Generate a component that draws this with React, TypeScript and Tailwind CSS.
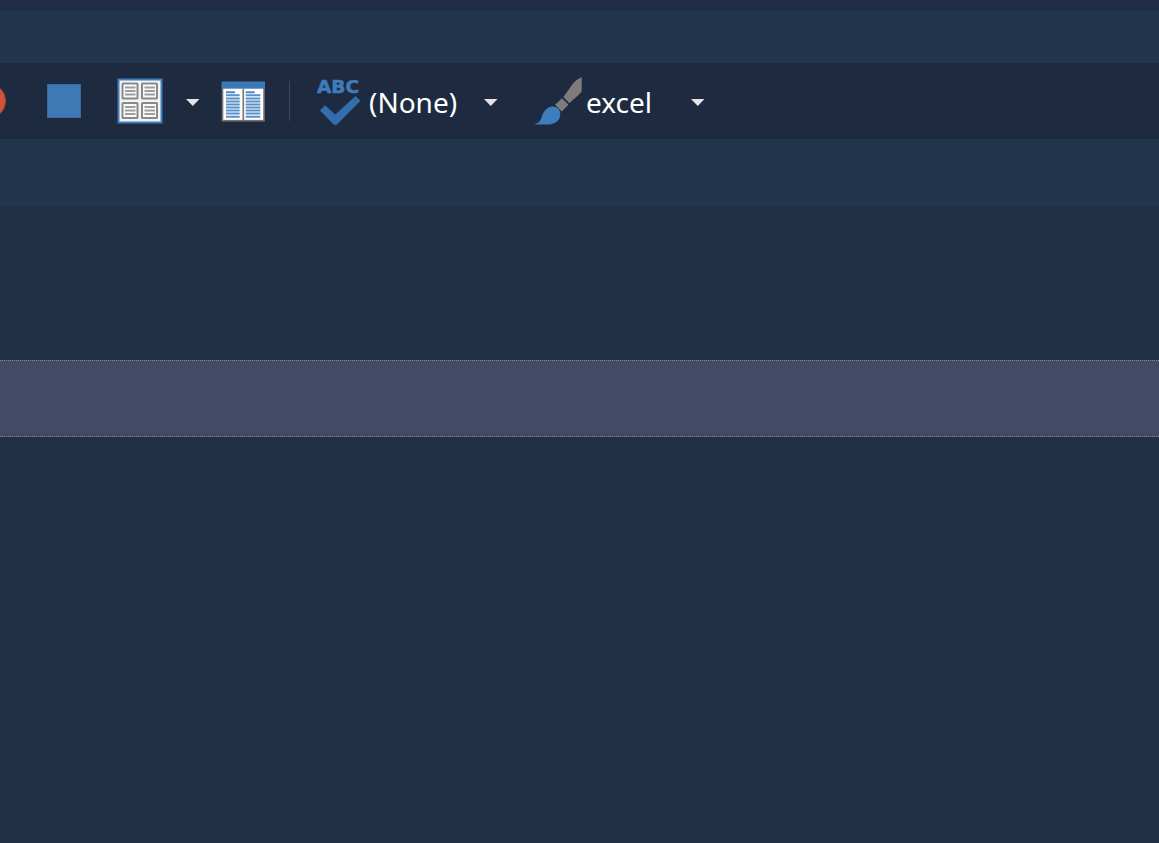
import React from "react";

type ToolSelectProps = {
  label: string;
  options: string[];
  className: string;
};

const Caret: React.FC = () => (
  <svg width="14" height="7" viewBox="0 0 14 7" aria-hidden="true">
    <path d="M0 0h13.5L6.75 7z" fill="#e6e3e4" />
  </svg>
);

const ToolSelect: React.FC<ToolSelectProps> = ({ label, options, className }) => (
  <div className={`relative flex items-center ${className}`}>
    <select
      aria-label={label}
      defaultValue={options[0]}
      className="w-full h-11 pt-[2px] appearance-none bg-transparent text-white text-[28px] leading-[40px] outline-none"
    >
      {options.map((option) => (
        <option key={option} value={option} className="bg-[#1e2a40]">
          {option}
        </option>
      ))}
    </select>
    <span className="absolute right-0 pointer-events-none pt-[2px]">
      <Caret />
    </span>
  </div>
);

const RecordIcon: React.FC = () => (
  <svg width="6" height="36" viewBox="0 0 6 36">
    <circle cx="-12" cy="18" r="17.5" fill="#d35134" stroke="#94453c" />
  </svg>
);

const StopIcon: React.FC = () => (
  <svg width="34" height="34" viewBox="0 0 34 34">
    <rect x="0.5" y="0.5" width="33" height="33" fill="#3e79b5" stroke="#396b9f" />
  </svg>
);

const PAGE_CELLS = [
  [3.5, 3.5],
  [23, 3.5],
  [3.5, 23],
  [23, 23],
];

const PagesIcon: React.FC = () => (
  <svg width="46" height="46" viewBox="0 0 46 46">
    <rect x="1.5" y="1.5" width="43" height="43" fill="#eef5fb" stroke="#407db9" strokeWidth="2" />
    {PAGE_CELLS.map(([x, y]) => (
      <g key={`${x}-${y}`} transform={`translate(${x} ${y})`}>
        <rect x="2" y="2" width="15" height="15" fill="#fbfafa" stroke="#8b8988" strokeWidth="2" rx="0.5" />
        <path d="M4.500 6h10.500M4.500 9.500h10.500M4.500 13h10.500" stroke="#a09e9d" strokeWidth="1.8" />
      </g>
    ))}
  </svg>
);

const BOOK_LINES = [15.3, 18.4, 21.4, 24.5, 27.5, 30.6, 33.6, 36.7];

const BookIcon: React.FC = () => (
  <svg width="44" height="42" viewBox="0 0 44 42">
    <rect x="1.5" y="4" width="41.5" height="36.7" fill="#fdfcfc" stroke="#777574" strokeWidth="1.6" />
    <rect x="0.7" y="1.5" width="43.3" height="7.2" fill="#3c79b7" />
    <path d="M22.3 8.7v32" stroke="#777574" strokeWidth="1.6" />
    <path d="M5 12.3h9M24.7 12.3h9" stroke="#4e89c4" strokeWidth="2" />
    {BOOK_LINES.map((y) => (
      <path key={y} d={`M5 ${y}h13.7M24.7 ${y}h14.6`} stroke="#5790c8" strokeWidth="2" />
    ))}
  </svg>
);

const SpellingIcon: React.FC = () => (
  <svg width="45" height="48" viewBox="0 0 45 48">
    <text
      x="1"
      y="16"
      fill="#3f7cba"
      stroke="#3f7cba"
      strokeWidth="0.6"
      fontFamily="DejaVu Sans, sans-serif"
      fontSize="18.5"
      fontWeight="700"
    >
      ABC
    </text>
    <path d="M4 33.5L9 28.3 19.3 37.6 39.5 19 44.500 23.700 20.800 47.700h-3z" fill="#326eac" />
  </svg>
);

const BrushIcon: React.FC = () => (
  <svg width="48" height="50" viewBox="0 0 48 50">
    <path d="M47.7 1v14.5q-1 1.5-3 3.2L35.3 27.2 29.4 21 39 7.500Q42 3.500 47.7 1z" fill="#7d7c7b" />
    <path d="M28 22.2l6.500 6.500-6.800 6.800-6.600-6.800z" fill="#7d7c7b" />
    <path
      d="M0 48.500C5.500 47 6.800 44 7.900 40.500 9.500 35 13.500 30.500 18.500 30.500c4.700 0 7.800 3.400 7.800 7.400 0 6.500-5.500 10.600-12.300 10.600z"
      fill="#3f7dbc"
    />
  </svg>
);

const App: React.FC = () => (
  <main className="min-h-screen flex flex-col bg-[#212f45] font-['Noto_Sans',sans-serif]">
    {/* Title strip */}
    <div className="h-[11px] bg-[#212d46]" />
    <div className="h-[52px] bg-[#23354c]" />

    {/* Toolbar */}
    <div role="toolbar" aria-label="Editing tools" className="h-[76px] flex items-center bg-[#1e2a40]">
      <button type="button" aria-label="Record">
        <RecordIcon />
      </button>
      <button type="button" aria-label="Stop" className="ml-[41px]">
        <StopIcon />
      </button>
      <button type="button" aria-label="Page grid" className="ml-9">
        <PagesIcon />
      </button>
      <button type="button" aria-label="Page grid options" className="ml-[23px] pt-[2px]">
        <Caret />
      </button>
      <button type="button" aria-label="Side by side" className="ml-[21px]">
        <BookIcon />
      </button>
      <div className="ml-6 w-px h-10 bg-[#3e485b]" />
      <button type="button" aria-label="Spelling" className="ml-[26px]">
        <SpellingIcon />
      </button>
      <ToolSelect label="Dictionary" options={["(None)"]} className="ml-2 w-[129px]" />
      <button type="button" aria-label="Highlighting" className="ml-9">
        <BrushIcon />
      </button>
      <ToolSelect label="Color scheme" options={["excel"]} className="ml-1 w-[119px]" />
    </div>

    <div className="h-[67px] bg-[#23354c]" />

    {/* Editor area with the current line selected */}
    <div className="flex-1 pt-[154px]">
      <div className="h-[77px] border-y border-dotted border-[#85858c] bg-[#434a65]" />
    </div>
  </main>
);

export default App;
